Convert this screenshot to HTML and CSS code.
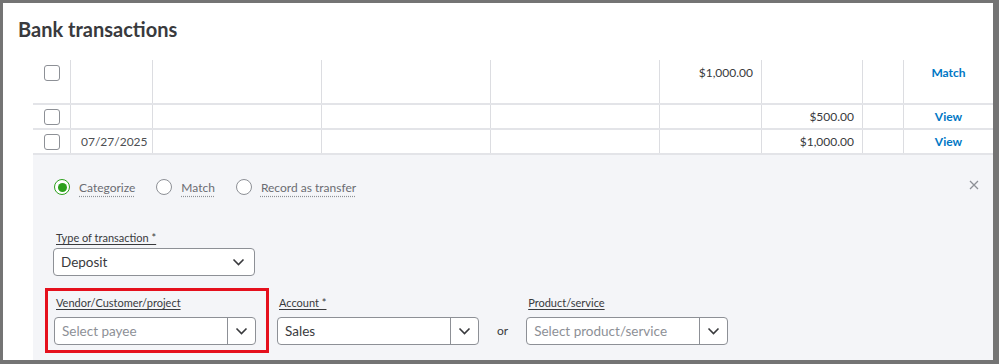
FILE: index.html
```html
<!DOCTYPE html>
<html lang="en">
<head>
  <meta charset="UTF-8">
  <title>Bank transactions</title>
  <link rel="stylesheet" href="styles.css">
</head>
<body>
  <div class="frame">
    <h1 class="title">Bank transactions</h1>

    <div class="txn-table">
      <div class="txn-row txn-row--tall">
        <div class="cell"><span class="checkbox"></span></div>
        <div class="cell"></div>
        <div class="cell"></div>
        <div class="cell"></div>
        <div class="cell"></div>
        <div class="cell cell--amount">$1,000.00</div>
        <div class="cell"></div>
        <div class="cell"></div>
        <div class="cell cell--action"><a class="action-link">Match</a></div>
      </div>
      <div class="txn-row">
        <div class="cell"><span class="checkbox"></span></div>
        <div class="cell"></div>
        <div class="cell"></div>
        <div class="cell"></div>
        <div class="cell"></div>
        <div class="cell"></div>
        <div class="cell cell--amount">$500.00</div>
        <div class="cell"></div>
        <div class="cell cell--action"><a class="action-link">View</a></div>
      </div>
      <div class="txn-row">
        <div class="cell"><span class="checkbox"></span></div>
        <div class="cell cell--date">07/27/2025</div>
        <div class="cell"></div>
        <div class="cell"></div>
        <div class="cell"></div>
        <div class="cell"></div>
        <div class="cell cell--amount">$1,000.00</div>
        <div class="cell"></div>
        <div class="cell cell--action"><a class="action-link">View</a></div>
      </div>
    </div>

    <section class="review-panel">
      <div class="panel-top">
        <div class="radio-group">
          <label class="radio radio--checked"><span class="radio-dot"></span><span class="radio-label">Categorize</span></label>
          <label class="radio"><span class="radio-dot"></span><span class="radio-label">Match</span></label>
          <label class="radio"><span class="radio-dot"></span><span class="radio-label">Record as transfer</span></label>
        </div>
        <button class="close-btn" aria-label="Close">
          <svg width="10" height="10" viewBox="0 0 10 10"><path d="M1 1l8 8M9 1l-8 8" stroke="#8d9096" stroke-width="1.3" fill="none"/></svg>
        </button>
      </div>

      <div class="field field--type">
        <div class="field-label">Type of transaction *</div>
        <div class="select">
          <div class="select-value">Deposit</div>
          <div class="select-btn select-btn--plain">
            <svg width="13" height="8" viewBox="0 0 13 8"><path d="M1.5 1.5l5 5 5-5" stroke="#393a3d" stroke-width="1.6" fill="none"/></svg>
          </div>
        </div>
      </div>

      <div class="field-row">
        <div class="highlight">
          <div class="field">
            <div class="field-label">Vendor/Customer/project</div>
            <div class="select">
              <div class="select-value select-value--placeholder">Select payee</div>
              <div class="select-btn">
                <svg width="13" height="8" viewBox="0 0 13 8"><path d="M1.5 1.5l5 5 5-5" stroke="#393a3d" stroke-width="1.6" fill="none"/></svg>
              </div>
            </div>
          </div>
        </div>

        <div class="field field--offset">
          <div class="field-label">Account *</div>
          <div class="select">
            <div class="select-value">Sales</div>
            <div class="select-btn">
              <svg width="13" height="8" viewBox="0 0 13 8"><path d="M1.5 1.5l5 5 5-5" stroke="#393a3d" stroke-width="1.6" fill="none"/></svg>
            </div>
          </div>
        </div>

        <span class="or">or</span>

        <div class="field field--offset">
          <div class="field-label">Product/service</div>
          <div class="select">
            <div class="select-value select-value--placeholder">Select product/service</div>
            <div class="select-btn">
              <svg width="13" height="8" viewBox="0 0 13 8"><path d="M1.5 1.5l5 5 5-5" stroke="#393a3d" stroke-width="1.6" fill="none"/></svg>
            </div>
          </div>
        </div>
      </div>
    </section>
  </div>
</body>
</html>
```

FILE: styles.css
```css
:root {
  --color-text: #393a3d;
  --color-muted: #6b6c72;
  --color-placeholder: #8d9096;
  --color-line: #e3e4e8;
  --color-vline: #dcdde1;
  --color-panel: #f4f5f8;
  --color-link: #0077c5;
  --color-green: #2ca01c;
  --color-red: #e5101d;
  --color-frame: #747474;
}

* {
  margin: 0;
  padding: 0;
  box-sizing: border-box;
  font-family: Lato, 'Open Sans', sans-serif;
}

body {
  background: #fff;
  color: var(--color-text);
}

.frame {
  height: 364px;
  display: flex;
  flex-direction: column;
  border-style: solid;
  border-color: var(--color-frame);
  border-width: 3px 6px 4px 3px;
  padding-top: 14px;
}

.title {
  font-size: 20px;
  font-weight: 700;
  line-height: 24px;
  padding-left: 15px;
  margin-bottom: 19px;
}

/* Transactions table */
.txn-table {
  margin-left: 30px;
}

.txn-row {
  display: grid;
  grid-template-columns: 37px 82px 169px 169px 169px 102px 101px 41px 1fr;
  height: 25px;
  border-bottom: 2px solid var(--color-line);
  font-size: 12px;
}

.txn-row--tall {
  height: 45px;
}

.cell {
  display: flex;
  align-items: center;
  border-left: 1px solid var(--color-vline);
}

.cell:first-child {
  border-left: none;
  justify-content: center;
}

.txn-row--tall .cell {
  align-items: flex-start;
  padding-top: 5px;
}

.checkbox {
  width: 16px;
  height: 16px;
  border: 1px solid var(--color-placeholder);
  border-radius: 3px;
  background: #fff;
}

.cell--date {
  padding-left: 10px;
  color: #4d4f53;
}

.cell--amount {
  justify-content: flex-end;
  padding-right: 8px;
}

.cell--action {
  justify-content: center;
}

.action-link {
  color: var(--color-link);
  font-weight: 700;
  font-size: 12px;
}

/* Review panel */
.review-panel {
  flex: 1;
  margin-left: 30px;
  background: var(--color-panel);
  padding: 24px 14px 0 20px;
}

.panel-top {
  display: flex;
  justify-content: space-between;
  align-items: center;
  height: 16px;
}

.radio-group {
  display: flex;
  gap: 21px;
  padding-left: 1px;
}

.radio {
  display: flex;
  align-items: center;
  gap: 9px;
  font-size: 12px;
  color: var(--color-muted);
}

.radio-dot {
  width: 16px;
  height: 16px;
  border-radius: 50%;
  border: 1px solid var(--color-placeholder);
  background: #fff;
  display: flex;
  align-items: center;
  justify-content: center;
}

.radio--checked .radio-dot {
  border: 1.5px solid var(--color-green);
}

.radio--checked .radio-dot::after {
  content: "";
  width: 9px;
  height: 9px;
  border-radius: 50%;
  background: var(--color-green);
}

.radio-label {
  text-decoration: underline dotted #8d9096;
  text-underline-offset: 4px;
}

.close-btn {
  background: none;
  border: none;
  display: flex;
  margin-top: -4px;
}

.field {
  width: 202px;
}

.field--type {
  margin-top: 36px;
}

.field-label {
  font-size: 11px;
  line-height: 14px;
  padding-left: 2px;
  margin-bottom: 7px;
  text-decoration: underline;
  text-underline-offset: 2px;
}

.field--type .field-label {
  padding-left: 3px;
  margin-bottom: 3px;
}

.select {
  display: flex;
  height: 28px;
  background: #fff;
  border: 1px solid var(--color-placeholder);
  border-radius: 4px;
}

.select-value {
  flex: 1;
  font-size: 13.5px;
  line-height: 26px;
  padding-left: 7px;
  white-space: nowrap;
  overflow: hidden;
}

.select-value--placeholder {
  color: var(--color-placeholder);
}

.select-btn {
  width: 28px;
  border-left: 1px solid var(--color-placeholder);
  display: flex;
  align-items: center;
  justify-content: center;
}

.select-btn--plain {
  width: 32px;
  border-left: none;
}

.field-row {
  display: flex;
  align-items: flex-start;
  margin-top: 12px;
  margin-left: -8px;
}

.highlight {
  border: 3px solid var(--color-red);
  padding: 5px 10px 5px 6px;
}

.field--offset {
  margin-top: 8px;
  margin-left: 8px;
}

.or {
  font-size: 12px;
  line-height: 28px;
  margin: 29px 10px 0 18px;
}
```
